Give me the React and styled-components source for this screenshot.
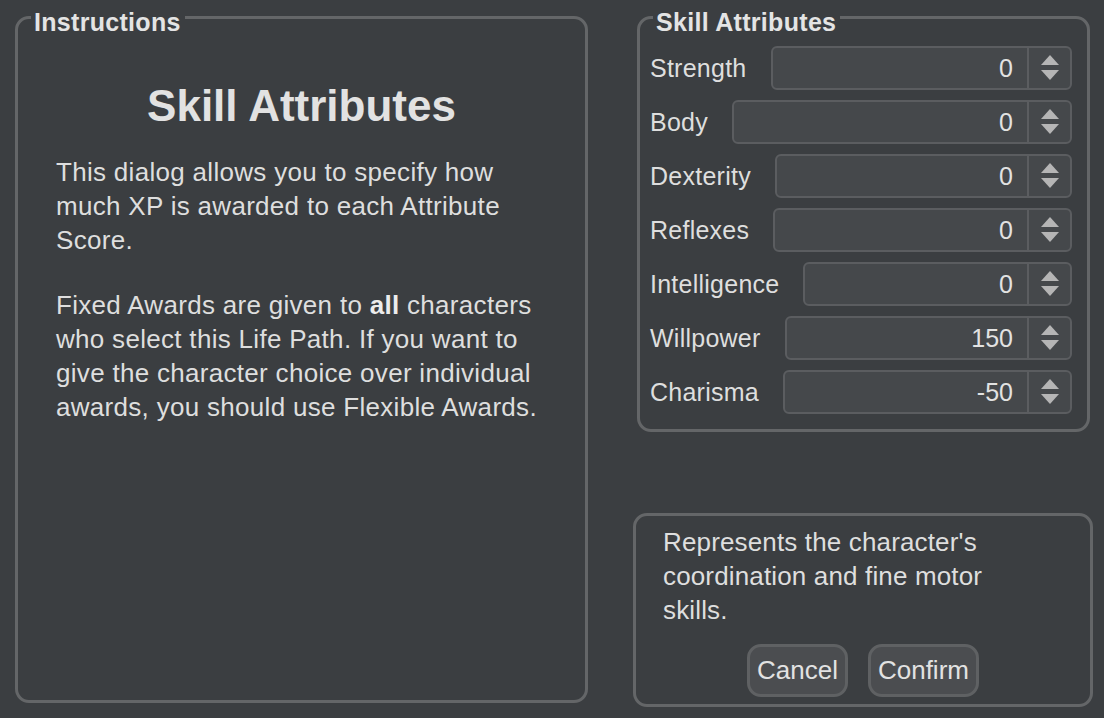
import styled, { createGlobalStyle } from "styled-components";

const attributes = [
  { name: "Strength", value: 0 },
  { name: "Body", value: 0 },
  { name: "Dexterity", value: 0 },
  { name: "Reflexes", value: 0 },
  { name: "Intelligence", value: 0 },
  { name: "Willpower", value: 150 },
  { name: "Charisma", value: -50 },
];

const GlobalStyle = createGlobalStyle`
  html, body {
    margin: 0;
    background: #3b3e41;
  }
  body {
    font-family: "Liberation Sans", Arial, sans-serif;
    color: #e0e0e0;
  }
`;

const SpinArrows = () => (
  <svg width="18" height="26" viewBox="0 0 18 26">
    <polygon points="9,0 18,10 0,10" fill="#b5b5b5" />
    <polygon points="0,15 18,15 9,25" fill="#b5b5b5" />
  </svg>
);

export default function App() {
  return (
    <>
      <GlobalStyle />
      <Page>
        <InstructionsBox>
          <Legend>Instructions</Legend>
          <InstructionsBody>
            <Heading>Skill Attributes</Heading>
            <Paragraph>
              This dialog allows you to specify how much XP is awarded to each
              Attribute Score.
            </Paragraph>
            <Paragraph>
              Fixed Awards are given to <b>all</b> characters who select this
              Life Path. If you want to give the character choice over
              individual awards, you should use Flexible Awards.
            </Paragraph>
          </InstructionsBody>
        </InstructionsBox>
        <RightColumn>
          <AttributesBox>
            <Legend>Skill Attributes</Legend>
            <AttributeList>
              {attributes.map((attr) => (
                <Row key={attr.name}>
                  <Label>{attr.name}</Label>
                  <SpinBox>
                    <SpinValue>{attr.value}</SpinValue>
                    <SpinButtons>
                      <SpinArrows />
                    </SpinButtons>
                  </SpinBox>
                </Row>
              ))}
            </AttributeList>
          </AttributesBox>
          <DescriptionBox>
            <Description>
              Represents the character's coordination and fine motor skills.
            </Description>
            <Buttons>
              <Button>Cancel</Button>
              <Button>Confirm</Button>
            </Buttons>
          </DescriptionBox>
        </RightColumn>
      </Page>
    </>
  );
}

const Page = styled.div`
  box-sizing: border-box;
  height: 718px;
  padding: 0 11px 11px 15px;
  display: flex;
  gap: 45px;
`;

const GroupBox = styled.fieldset`
  margin: 0;
  padding: 0;
  min-width: 0;
  border: 3px solid #646668;
  border-radius: 14px;
`;

const Legend = styled.legend`
  margin-left: 13px;
  padding: 9px 4px 0 3px;
  font-size: 25px;
  line-height: 26px;
  font-weight: bold;
  letter-spacing: 0.3px;
  color: #e4e4e4;
`;

const InstructionsBox = styled(GroupBox)`
  width: 573px;
  box-sizing: border-box;
  margin-bottom: 4px;
`;

const InstructionsBody = styled.div`
  padding: 0 30px 0 38px;
`;

const Heading = styled.h1`
  margin: 46px -30px 24px -38px;
  text-align: center;
  font-size: 44px;
  font-weight: bold;
  color: #e2e2e2;
`;

const Paragraph = styled.p`
  margin: 0 0 31px;
  font-size: 26px;
  line-height: 34px;
  letter-spacing: 0.3px;
  color: #dedede;
  b {
    color: #ececec;
  }
`;

const RightColumn = styled.div`
  width: 460px;
  display: flex;
  flex-direction: column;
  justify-content: space-between;
`;

const AttributesBox = styled(GroupBox)`
  margin: 0 3px 0 4px;
`;

const AttributeList = styled.div`
  padding: 11px 15px 15px 10px;
  display: flex;
  flex-direction: column;
  gap: 10px;
`;

const Row = styled.div`
  display: flex;
  align-items: center;
  gap: 24px;
`;

const Label = styled.span`
  font-size: 25px;
  letter-spacing: 0.25px;
  color: #dedede;
`;

const SpinBox = styled.div`
  flex: 1;
  height: 44px;
  box-sizing: border-box;
  display: flex;
  border: 2px solid #5b5d60;
  border-radius: 6px;
  background: #45484b;
`;

const SpinValue = styled.div`
  flex: 1;
  display: flex;
  align-items: center;
  justify-content: flex-end;
  padding-right: 14px;
  font-size: 25px;
  color: #e2e2e2;
`;

const SpinButtons = styled.div`
  width: 41px;
  border-left: 2px solid #5b5d60;
  display: flex;
  align-items: center;
  justify-content: center;
`;

const DescriptionBox = styled.div`
  height: 194px;
  box-sizing: border-box;
  border: 3px solid #646668;
  border-radius: 14px;
  padding: 9px 27px 7px 27px;
  display: flex;
  flex-direction: column;
`;

const Description = styled.p`
  margin: 0;
  max-width: 360px;
  font-size: 26px;
  line-height: 34px;
  letter-spacing: 0.15px;
  color: #dedede;
`;

const Buttons = styled.div`
  margin-top: auto;
  display: flex;
  justify-content: center;
  gap: 20px;
`;

const Button = styled.button`
  height: 53px;
  box-sizing: border-box;
  padding: 0 7px;
  border: 3px solid #5f6163;
  border-radius: 14px;
  background: #4b4d50;
  font-family: "Liberation Sans", Arial, sans-serif;
  font-size: 26px;
  color: #e2e2e2;
`;
